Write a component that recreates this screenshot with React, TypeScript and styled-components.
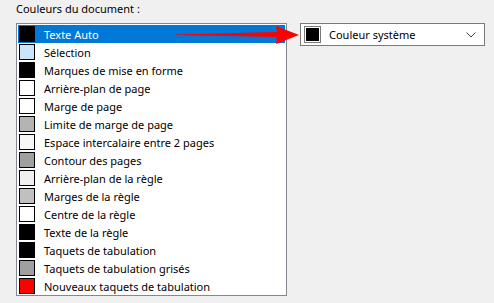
import React, { FunctionComponent } from "react"
import styled, { createGlobalStyle } from "styled-components"

const GlobalStyle = createGlobalStyle`
    html, body {
        margin: 0;
        padding: 0;
        background: #f0f0f0;
    }
    body {
        font-family: "Noto Sans", "Open Sans", sans-serif;
        font-size: 11px;
        color: #000;
    }
`

const Page = styled.div`
    position: relative;
    width: 494px;
    height: 303px;
    padding: 1px 0 0 16px;
    box-sizing: border-box;
`

const Label = styled.div`
    height: 22px;
    line-height: 16px;
`

const Columns = styled.div`
    display: flex;
    align-items: flex-start;
    gap: 13px;
`

const List = styled.div`
    width: 271px;
    height: 273px;
    box-sizing: border-box;
    border: 1px solid #828790;
    background: #fff;
    padding: 1px 1px 0 1px;
`

const Row = styled.div<{ $selected?: boolean }>`
    display: flex;
    align-items: center;
    height: 18px;
    padding-left: 1px;
    gap: 9px;
    background: ${p => (p.$selected ? "#0078d7" : "transparent")};
    color: ${p => (p.$selected ? "#fff" : "#000")};
    white-space: nowrap;
    overflow: hidden;
`

const Swatch = styled.span<{ $color: string }>`
    flex: none;
    width: 16px;
    height: 16px;
    box-sizing: border-box;
    border: 1px solid #000;
    background: ${p => p.$color};
`

const Select = styled.div`
    display: flex;
    align-items: center;
    width: 185px;
    height: 23px;
    box-sizing: border-box;
    border: 1px solid #7a7a7a;
    background: #fff;
    padding: 0 8px 0 3px;
    gap: 8px;
`

const SelectSwatch = styled.span`
    flex: none;
    width: 17px;
    height: 17px;
    box-sizing: border-box;
    border: 1px solid #7a7a7a;
    background: #000;
    box-shadow: inset 0 0 0 1px #fff;
`

const SelectText = styled.span`
    flex: 1;
`

const Arrow = styled.svg`
    position: absolute;
    left: 176px;
    top: 25px;
`

const colors: [string, string][] = [
    ["Texte Auto", "#000000"],
    ["Sélection", "#cce4f7"],
    ["Marques de mise en forme", "#000000"],
    ["Arrière-plan de page", "#ffffff"],
    ["Marge de page", "#ffffff"],
    ["Limite de marge de page", "#b4b4b4"],
    ["Espace intercalaire entre 2 pages", "#f7f7f7"],
    ["Contour des pages", "#a0a0a0"],
    ["Arrière-plan de la règle", "#f0f0f0"],
    ["Marges de la règle", "#c0c0c0"],
    ["Centre de la règle", "#ffffff"],
    ["Texte de la règle", "#000000"],
    ["Taquets de tabulation", "#000000"],
    ["Taquets de tabulation grisés", "#a0a0a0"],
    ["Nouveaux taquets de tabulation", "#ff0000"],
]

const App: FunctionComponent = () => {
    return (
        <Page>
            <GlobalStyle />
            <Label>Couleurs du document :</Label>
            <Columns>
                <List>
                    {colors.map(([name, color], i) => (
                        <Row key={name} $selected={i === 0}>
                            <Swatch $color={color} />
                            {name}
                        </Row>
                    ))}
                </List>
                <Select>
                    <SelectSwatch />
                    <SelectText>Couleur système</SelectText>
                    <svg width="10" height="6" viewBox="0 0 10 6">
                        <path d="M0.5 0.5 L5 5 L9.5 0.5" fill="none" stroke="#404040" strokeWidth="1" />
                    </svg>
                </Select>
            </Columns>
            <Arrow width="124" height="20" viewBox="0 0 124 20">
                <path d="M0 9.5 L101 7 L100 1 L123 10 L100 19 L101 12 L0 10 Z" fill="#ff0000" />
            </Arrow>
        </Page>
    )
}

export default App
